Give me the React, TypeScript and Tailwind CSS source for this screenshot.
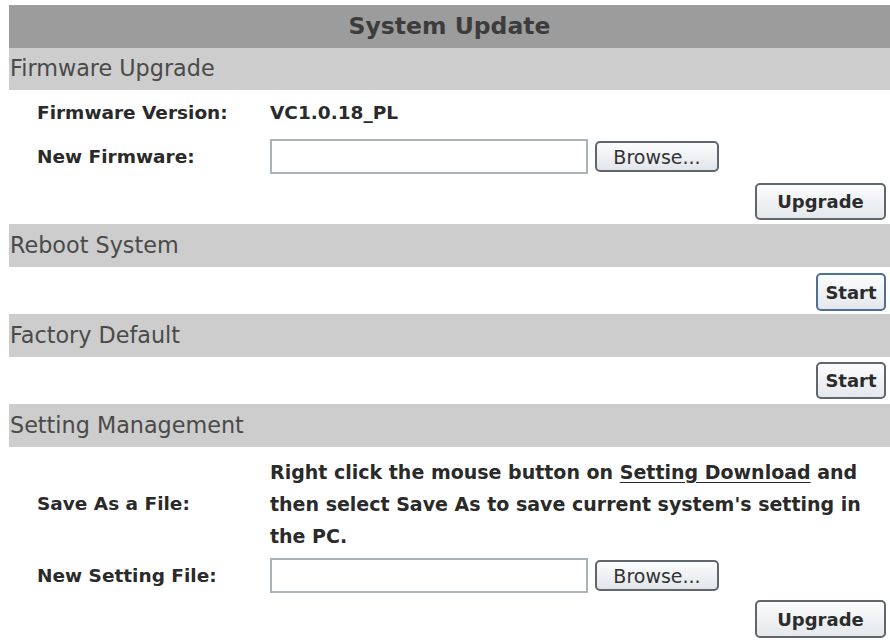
const font = "font-['DejaVu_Sans',Verdana,sans-serif]"

function Bar({ title }: { title: string }) {
  return (
    <div className="flex h-[43px] items-center bg-[#cdcdcd] pl-[1px] text-[22.3px] text-[#4a4a4a]">
      {title}
    </div>
  )
}

function Btn({ label, width, focus = false }: { label: string; width: string; focus?: boolean }) {
  return (
    <button
      type="button"
      className={`h-full ${width} rounded-[5px] border-2 bg-gradient-to-b from-[#fbfcfd] to-[#e4e8ec] text-[18px] font-bold text-[#2c2c2c] ${
        focus ? 'border-[#4f6f99]' : 'border-[#5f666d]'
      }`}
    >
      {label}
    </button>
  )
}

function FileRow({ label }: { label: string }) {
  return (
    <div className="flex h-[35px] items-center">
      <div className="w-[261px] pl-[28px] text-[18.5px] font-bold text-[#2a2a2a]">{label}</div>
      <div className="h-[35px] w-[318px] border-2 border-[#aab2ba] bg-white" />
      <button
        type="button"
        className="ml-[7px] h-[31px] w-[124px] rounded-[5px] border-2 border-[#5f666d] bg-gradient-to-b from-[#fbfcfd] to-[#e2e6ea] text-[19px] text-[#333]"
      >
        Browse...
      </button>
    </div>
  )
}

export default function App() {
  return (
    <div className={`${font} min-h-[640px] w-[890px] bg-white pl-[9px] pt-[5px]`}>
      <div className="flex h-[43px] items-center justify-center bg-[#9c9c9c] text-[23.5px] font-bold text-[#3c3c3c]">
        System Update
      </div>
      <div className="flex h-[42px] items-center bg-[#cdcdcd] pl-[1px] text-[22.3px] text-[#4a4a4a]">
        Firmware Upgrade
      </div>

      <div className="flex h-[46px] items-center text-[18.5px] font-bold text-[#2a2a2a]">
        <div className="w-[261px] pl-[28px]">Firmware Version:</div>
        <div>VC1.0.18_PL</div>
      </div>
      <div className="mt-[3px]">
        <FileRow label="New Firmware:" />
      </div>
      <div className="mb-[4px] mt-[9px] flex h-[37px] justify-end pr-[4px]">
        <Btn label="Upgrade" width="w-[131px]" />
      </div>

      <Bar title="Reboot System" />
      <div className="mb-[3px] mt-[6px] flex h-[38px] justify-end pr-[4px]">
        <Btn label="Start" width="w-[70px]" focus />
      </div>

      <Bar title="Factory Default" />
      <div className="mb-[5px] mt-[5px] flex h-[37px] justify-end pr-[4px]">
        <Btn label="Start" width="w-[70px]" />
      </div>

      <Bar title="Setting Management" />
      <div className="mt-[9px] flex items-center font-bold text-[#2a2a2a]">
        <div className="w-[261px] pl-[28px] text-[18.5px]">Save As a File:</div>
        <div className="whitespace-nowrap text-[19px] leading-[32px]">
          Right click the mouse button on <span className="underline underline-offset-[3px]">Setting Download</span> and
          <br />
          then select Save As to save current system's setting in
          <br />
          the PC.
        </div>
      </div>
      <div className="mt-[6px]">
        <FileRow label="New Setting File:" />
      </div>
      <div className="mt-[7px] flex h-[38px] justify-end pr-[4px]">
        <Btn label="Upgrade" width="w-[131px]" />
      </div>
    </div>
  )
}
